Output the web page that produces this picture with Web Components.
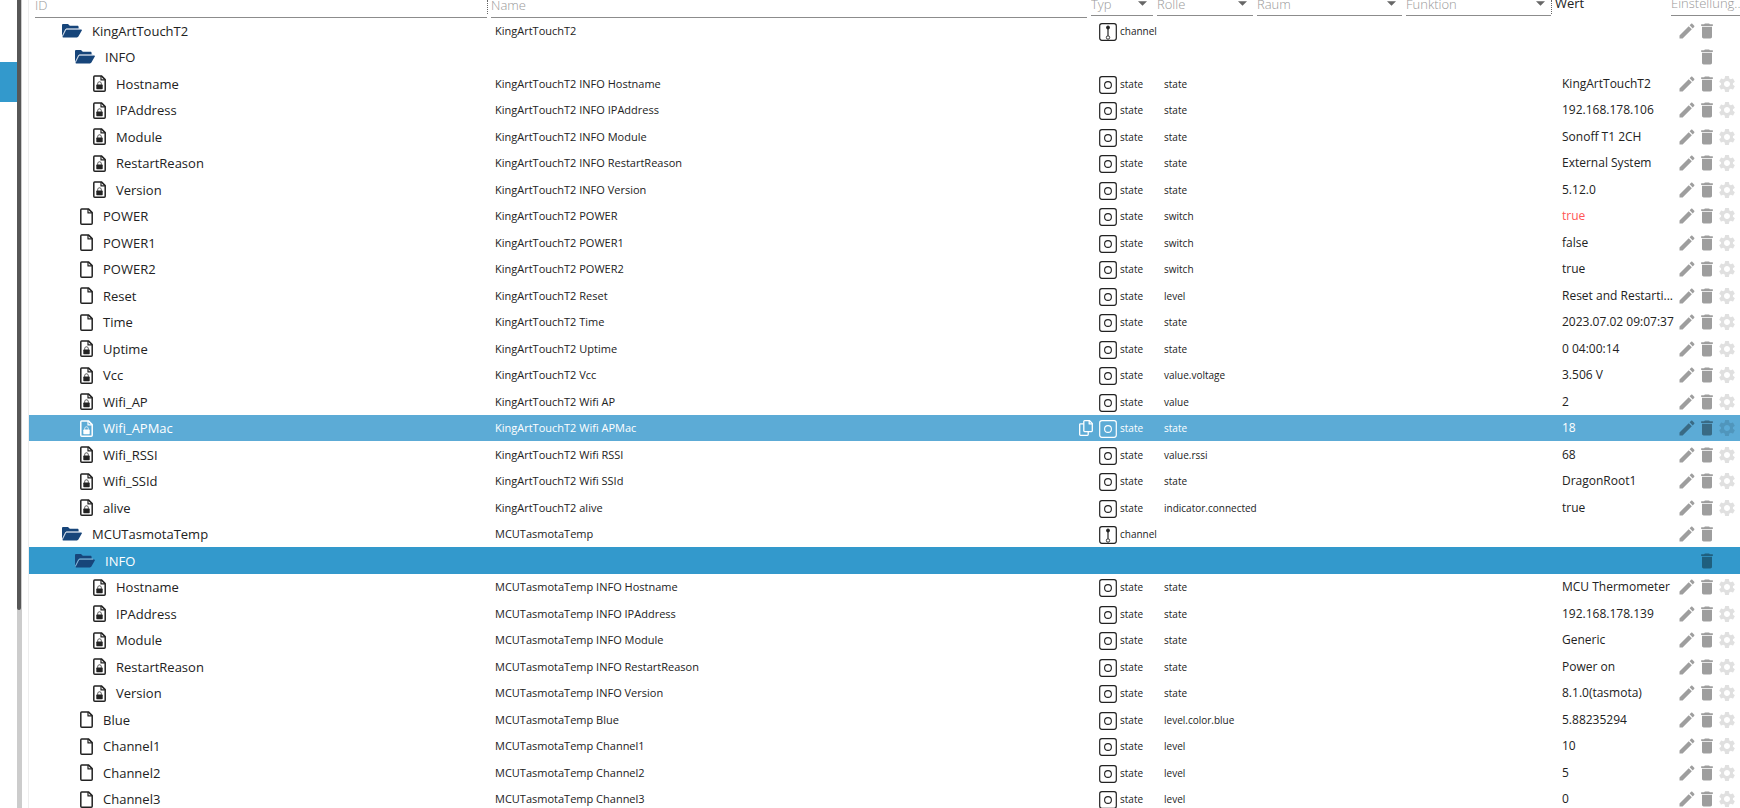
<!DOCTYPE html>
<html lang="de">
<head>
<meta charset="utf-8">
<title>Objekte</title>
<style>
  html, body { margin: 0; height: 100%; overflow: hidden; }
  body { background: #fff; color: #222; font: 13px/20px "Open Sans", "Noto Sans", sans-serif; }
</style>
</head>
<body>
<app-shell>
  <side-nav slot="nav"></side-nav>
  <object-browser></object-browser>
</app-shell>

<template id="app-shell">
  <style>
    :host { display: flex; height: 100vh; overflow: hidden; }
    main { flex: 1; min-width: 0; margin-left: 6px; border-left: 1px solid #eee; }
  </style>
  <slot name="nav"></slot>
  <main><slot></slot></main>
</template>

<template id="side-nav">
  <style>
    :host { display: flex; flex: none; width: 22px; }
    nav { flex: 1; padding-top: 62px; }
    a { display: block; height: 40px; background: #3399cc; }
    .track { width: 5px; background: #ccc; }
    .thumb { width: 4px; height: 610px; background: #575757; border-radius: 0 0 2px 2px; }
  </style>
  <nav><a href="#objects" aria-label="Objekte"></a></nav>
  <div class="track"><div class="thumb"></div></div>
</template>

<template id="filter-field">
  <style>
    :host { display: flex; align-items: flex-end; position: relative; height: 18px; font-size: 13px; font-weight: 300; color: #999; }
    :host([kind="text"]) { margin: 0 2px; }
    :host([kind="select"]), :host([kind="label"]) { height: 16px; margin: 0 2px 2px; }
    input, select { flex: 1; min-width: 0; width: 100%; height: 24px; box-sizing: border-box; margin: 0; padding: 0 0 1px; border: 0;
      border-bottom: 1px solid #8c8c8c; border-radius: 0; background: none; font: inherit; color: inherit; outline: 0; appearance: none; }
    select { padding: 0; }
    input::placeholder { color: #999; opacity: 1; }
    svg { position: absolute; right: 6px; bottom: 10px; width: 9px; height: 5px; fill: #666; pointer-events: none; }
    .caption { flex: 1; min-width: 0; overflow: hidden; white-space: nowrap; height: 23px; line-height: 23px; border-bottom: 1px solid #8c8c8c; }
    .plain { border-color: transparent; color: #222; font-weight: 400; }
    .grip { position: absolute; right: -1px; top: 0; height: 14px; border-right: 1px dotted #666; }
  </style>
</template>

<template id="tree-node">
  <style>
    :host { display: flex; align-items: center; white-space: nowrap; }
    svg { flex: none; }
    .folder { width: 20px; height: 14px; margin-right: 10px; }
    .file { width: 13px; height: 17px; margin-right: 10px; }
    :host([depth="0"]) { padding-left: 33px; }
    :host([depth="1"]) { padding-left: 46px; }
    :host([depth="2"]) { padding-left: 51px; }
    :host([depth="3"]) { padding-left: 64px; }
  </style>
  <slot name="icon"></slot>
</template>

<template id="type-badge">
  <style>
    :host { display: flex; align-items: center; gap: 3px; font-size: 10px; white-space: nowrap; }
    svg { width: 18px; height: 18px; margin-top: 2px; flex: none; fill: none; stroke: currentColor; }
  </style>
</template>

<template id="row-actions">
  <style>
    :host { display: flex; align-items: center; }
    button { display: block; width: 20px; height: 20px; padding: 0; border: 0; background: none; color: rgba(0,0,0,.38); }
    button.faint { color: rgba(0,0,0,.12); }
    svg { display: block; width: 20px; height: 20px; fill: currentColor; }
    span { width: 20px; }
  </style>
</template>

<template id="object-browser">
  <style>
    :host { display: block; }
    table { width: 100%; table-layout: fixed; border-collapse: collapse; border-spacing: 0; }
    th, td { padding: 0; text-align: left; font-weight: 400; vertical-align: middle; white-space: nowrap; }
    thead tr { height: 18px; }
    tbody tr { height: 27px; }
    tbody tr:first-child, tbody tr:nth-child(even) { height: 26px; }
    .id { width: 460px; } .typ { width: 66px; } .role { width: 100px; } .room, .fn { width: 149px; }
    .val { width: 118px; } .set { width: 69px; }
    th.id filter-field { margin-left: 6px; }
    th.set filter-field { margin-right: 0; margin-left: 0; }
    td.id { font-size: 13px; }
    td.name { padding-left: 6px; font-size: 11px; }
    td.typ { padding-left: 10px; }
    td.role { padding-left: 9px; font-size: 10px; }
    td.val { padding-left: 9px; font-size: 12px; }
    td.set { padding-left: 6px; }
    .line { display: flex; justify-content: space-between; align-items: center; margin-right: -4px; }
    .copy { display: block; border: 0; padding: 0; background: none; color: inherit; height: 16px; }
    .copy svg { display: block; width: 14px; height: 16px; }
    tr.hover { background: #5cabd6; color: #fff; }
    tr.selected { background: #3399cc; color: #fff; }
    .changed { color: #f55; }
  </style>
  <table>
    <thead><tr>
      <th class="id"><filter-field kind="text" label="ID" grip></filter-field></th>
      <th class="name"><filter-field kind="text" label="Name"></filter-field></th>
      <th class="typ"><filter-field kind="select" label="Typ"></filter-field></th>
      <th class="role"><filter-field kind="select" label="Rolle"></filter-field></th>
      <th class="room"><filter-field kind="select" label="Raum"></filter-field></th>
      <th class="fn"><filter-field kind="select" label="Funktion" grip></filter-field></th>
      <th class="val"><filter-field kind="label" label="Wert" plain></filter-field></th>
      <th class="set"><filter-field kind="label" label="Einstellung..."></filter-field></th>
    </tr></thead>
    <tbody></tbody>
  </table>
</template>

<script>
  const base = (id) => class extends HTMLElement {
    constructor() {
      super();
      this.attachShadow({ mode: "open" }).append(document.getElementById(id).content.cloneNode(true));
    }
    add(html) { this.shadowRoot.append(document.createRange().createContextualFragment(html)); }
  };

  const ICON = {
    folder: '<svg class="folder" viewBox="0 0 20 14"><path fill="#17457a" d="M0 12V1.2C0 .5.5 0 1.2 0H6l1.8 1.8h7.6c.7 0 1.2.5 1.2 1.2v1.4H5.2c-.9 0-1.6.5-2 1.2z"/><path fill="#17457a" d="M4.8 5.6h14.4c.6 0 1 .5.6 1l-3.4 6c-.3.5-.8.8-1.4.8H1.2c-.6 0-.9-.5-.6-1l3-6c.3-.5.7-.8 1.2-.8z"/><path fill="none" stroke="#a9bdd4" stroke-width=".8" d="M.4 12.4 3.6 6c.3-.6.8-.9 1.4-.9h13"/></svg>',
    file: (lock) => '<svg class="file" viewBox="0 0 13 17" fill="none" stroke="currentColor" stroke-width="1.5" stroke-linejoin="round"><path d="M1.700.900H8.400L12.200 4.600V15.200c0 .6-.4 1-1 1H1.800c-.6 0-1-.4-1-1V2.100c0-.7.4-1.200.9-1.200z"/><path d="M8 1v3.900h4" stroke-width="1.200"/>' +
      (lock ? '<rect x="3.300" y="9.600" width="6.400" height="4.600" rx=".6" fill="currentColor" stroke="none"/><path d="M4.700 9.800V8.600c0-2.400 3.600-2.400 3.600 0v1.200" stroke-width=".8"/>' : '') + '</svg>',
    state: '<svg viewBox="0 0 18 18"><rect x=".7" y=".7" width="16.6" height="16.6" rx="2.200" stroke-width="1.200"/><circle cx="9" cy="9" r="3.400" stroke-width="1.100"/></svg>',
    channel: '<svg viewBox="0 0 18 18"><rect x=".7" y=".7" width="16.6" height="16.6" rx="2.200" stroke-width="1.200"/><circle cx="9" cy="4.500" r="1.500" fill="currentColor"/><circle cx="9" cy="14.500" r="1.700" stroke-width=".9"/><path d="M9 5v7.700" stroke-width="1.200"/></svg>',
    edit: '<svg viewBox="0 0 24 24"><path d="M3 17.250V21h3.750L17.810 9.940l-3.750-3.750L3 17.250zM20.710 7.040c.39-.39.39-1.020 0-1.410l-2.340-2.340c-.39-.39-1.020-.39-1.410 0l-1.830 1.830 3.750 3.750 1.830-1.830z"/></svg>',
    trash: '<svg viewBox="0 0 24 24"><path d="M6 19c0 1.100.9 2 2 2h8c1.100 0 2-.9 2-2V7H6v12zM19 4h-3.500l-1-1h-5l-1 1H5v2h14V4z"/></svg>',
    gear: '<svg viewBox="0 0 24 24"><path d="M19.140 12.940c.04-.3.06-.61.06-.94 0-.32-.02-.64-.07-.94l2.030-1.580c.18-.14.23-.41.12-.61l-1.920-3.320c-.12-.22-.37-.29-.59-.22l-2.390.96c-.5-.38-1.030-.7-1.620-.94l-.36-2.540c-.04-.24-.24-.41-.48-.41h-3.840c-.24 0-.43.17-.47.41l-.36 2.540c-.59.24-1.130.57-1.620.94l-2.390-.96c-.22-.08-.47 0-.59.22L2.740 8.870c-.12.21-.08.47.12.61l2.030 1.580c-.05.3-.09.63-.09.94s.02.64.07.94l-2.030 1.580c-.18.14-.23.41-.12.61l1.920 3.320c.12.22.37.29.59.22l2.390-.96c.5.38 1.030.7 1.620.94l.36 2.540c.05.24.24.41.48.41h3.840c.24 0 .44-.17.47-.41l.36-2.540c.59-.24 1.130-.56 1.620-.94l2.390.96c.22.08.47 0 .59-.22l1.920-3.320c.12-.22.07-.47-.12-.61l-2.010-1.580zM12 15.600c-1.980 0-3.600-1.620-3.600-3.600s1.620-3.600 3.600-3.600 3.600 1.620 3.600 3.600-1.620 3.600-3.600 3.600z"/></svg>',
    copy: '<svg viewBox="0 0 14 16" fill="none" stroke="currentColor" stroke-width="1.300" stroke-linejoin="round"><path d="M5.600.7h5l2.700 2.700v7.400c0 .5-.3.8-.8.8H5.600c-.5 0-.8-.3-.8-.8V1.500c0-.5.3-.8.8-.8z"/><path d="M10.200.9v3h3M4.600 3.800H1.500c-.5 0-.8.3-.8.8v9.900c0 .5.3.8.8.8h6.900c.5 0 .8-.3.8-.8v-2.700"/></svg>'
  };

  customElements.define("app-shell", base("app-shell"));
  customElements.define("side-nav", base("side-nav"));

  customElements.define("filter-field", class extends base("filter-field") {
    connectedCallback() {
      const label = this.getAttribute("label"), kind = this.getAttribute("kind");
      if (kind === "text") this.add(`<input type="text" placeholder="${label}" aria-label="${label}">`);
      else if (kind === "select") this.add(`<select aria-label="${label}"><option>${label}</option></select><svg viewBox="0 0 10 5"><path d="M0 0h10L5 5z"/></svg>`);
      else this.add(`<span class="caption ${this.hasAttribute("plain") ? "plain" : ""}">${label}</span>`);
      if (this.hasAttribute("grip")) this.add('<span class="grip"></span>');
    }
  });

  customElements.define("tree-node", class extends base("tree-node") {
    connectedCallback() {
      const kind = this.getAttribute("kind");
      this.add((kind === "folder" ? ICON.folder : ICON.file(kind === "locked")) + "<slot></slot>");
    }
  });

  customElements.define("type-badge", class extends base("type-badge") {
    connectedCallback() { this.add(ICON[this.getAttribute("type")] + `<span>${this.getAttribute("type")}</span>`); }
  });

  customElements.define("row-actions", class extends base("row-actions") {
    connectedCallback() {
      const n = +this.getAttribute("level");
      this.add((n > 1 ? `<button aria-label="Bearbeiten">${ICON.edit}</button>` : "<span></span>") +
        `<button aria-label="Löschen">${ICON.trash}</button>` +
        (n > 2 ? `<button class="faint" aria-label="Einstellungen">${ICON.gear}</button>` : ""));
    }
  });

  /* depth, kind, id, name, type, role, value, row class */
  const K = "KingArtTouchT2", M = "MCUTasmotaTemp";
  const info = (dev, id, value) => [3, "locked", id, `${dev} INFO ${id}`, "state", "state", value];
  const item = (dev, kind, id, role, value, cls) => [2, kind, id, `${dev} ${id.replace("_", " ")}`, "state", role, value, cls];
  const ROWS = [
    [0, "folder", K, K, "channel", "", ""],
    [1, "folder", "INFO", "", "", "", ""],
    info(K, "Hostname", "KingArtTouchT2"),
    info(K, "IPAddress", "192.168.178.106"),
    info(K, "Module", "Sonoff T1 2CH"),
    info(K, "RestartReason", "External System"),
    info(K, "Version", "5.12.0"),
    item(K, "file", "POWER", "switch", "true", "alert"),
    item(K, "file", "POWER1", "switch", "false"),
    item(K, "file", "POWER2", "switch", "true"),
    item(K, "file", "Reset", "level", "Reset and Restarti..."),
    item(K, "file", "Time", "state", "2023.07.02 09:07:37"),
    item(K, "locked", "Uptime", "state", "0 04:00:14"),
    item(K, "locked", "Vcc", "value.voltage", "3.506 V"),
    item(K, "locked", "Wifi_AP", "value", "2"),
    item(K, "locked", "Wifi_APMac", "state", "18", "hover"),
    item(K, "locked", "Wifi_RSSI", "value.rssi", "68"),
    item(K, "locked", "Wifi_SSId", "state", "DragonRoot1"),
    item(K, "locked", "alive", "indicator.connected", "true"),
    [0, "folder", M, M, "channel", "", ""],
    [1, "folder", "INFO", "", "", "", "", "selected"],
    info(M, "Hostname", "MCU Thermometer"),
    info(M, "IPAddress", "192.168.178.139"),
    info(M, "Module", "Generic"),
    info(M, "RestartReason", "Power on"),
    info(M, "Version", "8.1.0(tasmota)"),
    item(M, "file", "Blue", "level.color.blue", "5.88235294"),
    item(M, "file", "Channel1", "level", "10"),
    item(M, "file", "Channel2", "level", "5"),
    item(M, "file", "Channel3", "level", "0")
  ];

  customElements.define("object-browser", class extends base("object-browser") {
    connectedCallback() {
      this.shadowRoot.querySelector("tbody").innerHTML = ROWS.map(([depth, kind, id, name, type, role, value, cls = ""]) => `
        <tr class="${cls}">
          <td class="id"><tree-node depth="${depth}" kind="${kind}">${id}</tree-node></td>
          <td class="name"><div class="line"><span>${name}</span>${cls === "hover" ? `<button class="copy" aria-label="Kopieren">${ICON.copy}</button>` : ""}</div></td>
          <td class="typ">${type ? `<type-badge type="${type}"></type-badge>` : ""}</td>
          <td class="role">${role}</td><td></td><td></td>
          <td class="val"><span class="${cls === "alert" ? "changed" : ""}">${value}</span></td>
          <td class="set"><row-actions level="${!type ? 1 : type === "channel" ? 2 : 3}"></row-actions></td>
        </tr>`).join("");
    }
  });
</script>
</body>
</html>
